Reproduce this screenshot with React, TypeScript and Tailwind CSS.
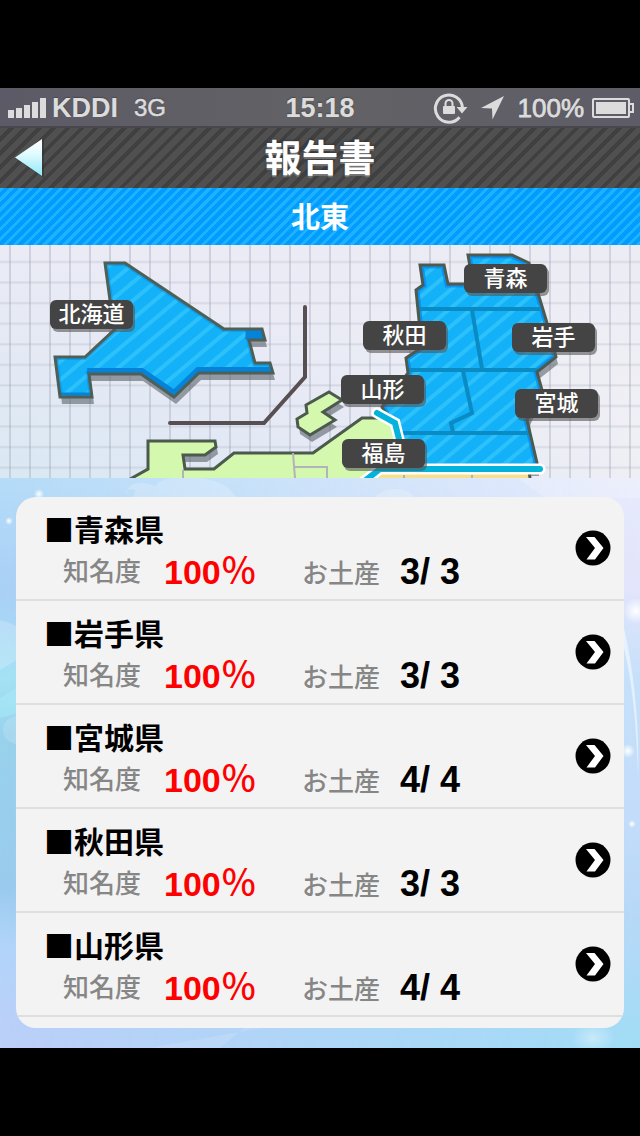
import { useId } from 'react';

interface Prefecture {
  name: string;
  fame: number;
  found: number;
  total: number;
}

const prefectures: Prefecture[] = [
  { name: '青森県', fame: 100, found: 3, total: 3 },
  { name: '岩手県', fame: 100, found: 3, total: 3 },
  { name: '宮城県', fame: 100, found: 4, total: 4 },
  { name: '秋田県', fame: 100, found: 3, total: 3 },
  { name: '山形県', fame: 100, found: 4, total: 4 },
];

const mapLabels = [
  { name: '北海道', position: 'left-[50px] top-[55px]' },
  { name: '青森', position: 'left-[464px] top-[19px]' },
  { name: '秋田', position: 'left-[363px] top-[76px]' },
  { name: '岩手', position: 'left-[512px] top-[78px]' },
  { name: '山形', position: 'left-[341px] top-[130px]' },
  { name: '宮城', position: 'left-[515px] top-[144px]' },
  { name: '福島', position: 'left-[342px] top-[194px]' },
];

function StatusBar() {
  return (
    <div className="grid h-10 grid-cols-3 items-center border-b-2 border-[#47474d] bg-linear-to-r from-[#5c5a66] via-[#636265] to-[#5e5c67] px-2 pt-0.5 text-[27px] leading-8 font-bold text-[#dcdcdc] [text-shadow:0_-1px_1px_#33333380]">
      <div className="flex items-center">
        <svg className="h-5 w-[38px]" viewBox="0 0 38 20" fill="currentColor" aria-hidden="true">
          <rect x="0" y="12" width="6" height="8" />
          <rect x="8" y="10" width="6" height="10" />
          <rect x="16" y="7" width="6" height="13" />
          <rect x="24" y="4" width="6" height="16" />
          <rect x="32" y="0" width="6" height="20" />
        </svg>
        <span className="ml-1.5">KDDI</span>
        <span className="ml-4 text-2xl leading-8 font-normal [-webkit-text-stroke:0.5px_currentColor]">3G</span>
      </div>
      <span className="text-center">15:18</span>
      <div className="-mr-2 flex items-center justify-end">
        <svg className="h-8 w-9 shrink-0" viewBox="0 0 36 32" fill="none" aria-hidden="true">
          <path d="M27.5 25.2A13.6 13.6 0 1 1 30.5 15" stroke="currentColor" strokeWidth="3" />
          <path d="M24.5 15h11L30 21.5z" fill="currentColor" />
          <rect x="11" y="14" width="12" height="8" rx="1" fill="currentColor" />
          <path d="M13.500 14v-2.500a3.500 3.500 0 0 1 7 0V14" stroke="currentColor" strokeWidth="2" />
        </svg>
        <svg className="ml-3 h-6 w-6 shrink-0" viewBox="0 0 24 24" fill="currentColor" aria-hidden="true">
          <path d="M24 0 12.500 23.500 12 12.500 1 12z" />
        </svg>
        <span className="ml-3.5 text-[26px] leading-8 font-normal [-webkit-text-stroke:0.8px_currentColor]">100%</span>
        <svg className="mr-1.5 ml-2 h-5 w-[42px] shrink-0" viewBox="0 0 42 20" aria-hidden="true">
          <rect x="1" y="1" width="36" height="18" rx="1" fill="none" stroke="currentColor" strokeWidth="2" />
          <rect x="4" y="4" width="30" height="12" fill="currentColor" />
          <path d="M38 6h3v8h-3" fill="none" stroke="currentColor" strokeWidth="2" />
        </svg>
      </div>
    </div>
  );
}

function Header() {
  return (
    <header>
      <div className="grid h-[60px] grid-cols-[64px_1fr_64px] items-center bg-[repeating-linear-gradient(135deg,#505050_0px,#505050_6px,#404040_6px,#404040_10px)]">
        <button type="button" aria-label="戻る" className="flex h-full items-center pl-3.5">
          <svg className="h-10 w-8" viewBox="0 0 32 40" aria-hidden="true">
            <defs>
              <linearGradient id="back" x1="0" y1="0" x2="0" y2="1">
                <stop offset="0" stopColor="#ffffff" />
                <stop offset="0.400" stopColor="#e2fbff" />
                <stop offset="1" stopColor="#8eeaf8" />
              </linearGradient>
            </defs>
            <path d="M30 1v39L1 20z" fill="#2b2b2b" opacity="0.500" />
            <path d="M28 1v37L1 19.500z" fill="url(#back)" />
          </svg>
        </button>
        <h1 className="pt-1 text-center text-[37px] leading-10 font-bold text-white [text-shadow:0_2px_1px_#777,0_0_3px_#222]">
          報告書
        </h1>
      </div>
      <h2 className="flex h-[57px] items-center justify-center bg-[repeating-linear-gradient(135deg,#1eb1ff_0px,#1eb1ff_3px,#009dff_3px,#009dff_7px)] pt-1 text-[29px] font-bold text-white">
        北東
      </h2>
    </header>
  );
}

function RegionMap() {
  const id = useId();
  const hokkaido =
    'M105 18H125L224 84H262L265 95H249L255 118H270L273 128H199L174 152 141 129H89L92 152H60L55 112H85L114 85z';
  const tohoku =
    'M420 20H444L448 39H473L468 10H512L529 18 538 48 547 78 556 112 537 127 542 145 527 175 537 218V224H400L400 195 382 162 408 128 406 113 421 103 419 75 416 45 423 40z';
  const west =
    'M120 240 132 233 148 224V196H215L216 202 205 210H183L185 224H214L234 208H313L362 173H390L402 200V224L372 240z';
  const island = 'M329 147 342 155 323 167 335 175 310 190 298 182 297 174 307 168 306 160z';

  return (
    <section aria-label="地図" className="relative overflow-hidden bg-[#e9ebf3]">
      <svg className="block h-[233px] w-[640px]" viewBox="0 0 640 233" aria-hidden="true">
        <defs>
          <linearGradient id={`${id}sky`} x1="0" y1="1" x2="1" y2="0.600">
            <stop offset="0" stopColor="#d9e8f3" />
            <stop offset="0.500" stopColor="#e4e9f5" />
            <stop offset="1" stopColor="#f2f1f5" />
          </linearGradient>
          <linearGradient id={`${id}haze`} x1="0" y1="0" x2="0" y2="1">
            <stop offset="0" stopColor="#ebebf5" stopOpacity="0.900" />
            <stop offset="1" stopColor="#ebebf5" stopOpacity="0" />
          </linearGradient>
          <pattern id={`${id}grid`} width="20" height="20.570" patternUnits="userSpaceOnUse">
            <path d="M10 0V20.570" stroke="#8e97a5" strokeOpacity="0.300" strokeWidth="2" />
            <path d="M0 17H20" stroke="#8e97a5" strokeOpacity="0.220" strokeWidth="2" />
          </pattern>
          <pattern id={`${id}stripe`} width="14" height="14" patternUnits="userSpaceOnUse" patternTransform="rotate(50)">
            <rect width="14" height="14" fill="#13b1f7" />
            <rect width="4" height="14" fill="#2cc1fb" />
          </pattern>
          <clipPath id={`${id}hokkaido`}>
            <path d={hokkaido} />
          </clipPath>
          <clipPath id={`${id}tohoku`}>
            <path d={tohoku} />
          </clipPath>
        </defs>

        <rect width="640" height="233" fill={`url(#${id}sky)`} />
        <rect width="640" height="233" fill={`url(#${id}haze)`} />
        <rect width="640" height="233" fill={`url(#${id}grid)`} />

        <g fill="#5d646c" opacity="0.600" transform="translate(2 7)">
          <path d={hokkaido} />
          <path d={tohoku} />
          <path d={west} />
          <path d={island} />
        </g>

        <g strokeWidth="3" stroke="#4b5a4c">
          <path d={west} fill="#d4f9ae" />
          <path d={island} fill="#d4f9ae" />
          <path d="M362 240 376 226H529L531 240z" fill="#f6e08e" />
        </g>
        <path d="M183 225V233M293 208 295 233M294 222H327V233M404 230V233M472 230V233" fill="none" stroke="#b1b3b8" strokeWidth="2" />

        <path d={hokkaido} fill={`url(#${id}stripe)`} />
        <g clipPath={`url(#${id}hokkaido)`}>
          <path d={hokkaido} fill="none" stroke="#0583d8" strokeWidth="6" opacity="0.400" />
          <path d="M87 126H142L174 148 198 125H273" fill="none" stroke="#0583d8" strokeWidth="6" />
          <path d="M247 86H265V93H247zM58 149H94" fill="#0583d8" stroke="#0583d8" strokeWidth="3" />
        </g>
        <path d={hokkaido} fill="none" stroke="#4d5f57" strokeWidth="3" />

        <path d={tohoku} fill={`url(#${id}stripe)`} />
        <g clipPath={`url(#${id}tohoku)`}>
          <path d={tohoku} fill="none" stroke="#0583e8" strokeWidth="7" opacity="0.700" />
        </g>
        <path
          d="M419 64H540M408 125H538M472 65 482 124M463 126 472 168 451 178 453 187M402 188H530"
          fill="none"
          stroke="#0a8bc3"
          strokeWidth="4"
        />
        <path d={tohoku} fill="none" stroke="#4d5a50" strokeWidth="3" />

        <g fill="none" strokeLinecap="round">
          <path d="M377 168 395 178 400 198 402 214M362 238 380 224H540" stroke="#ffffff" strokeWidth="11" />
          <path d="M377 168 395 178 400 198 402 214M362 238 380 224H540" stroke="#04b3dc" strokeWidth="6" />
        </g>
        <path d="M305 62V132L264 178H170" fill="none" stroke="#584f52" strokeWidth="4" strokeLinecap="round" />
      </svg>

      {mapLabels.map((label) => (
        <button
          key={label.name}
          type="button"
          className={`absolute flex h-[29px] w-[83px] items-center justify-center rounded-md bg-[#444444] text-[22px] font-medium text-white shadow-[2px_3px_0_#55555599] ${label.position}`}
        >
          {label.name}
        </button>
      ))}
    </section>
  );
}

function Backdrop() {
  return (
    <svg className="absolute inset-0 h-full w-full" viewBox="0 0 640 570" preserveAspectRatio="none" aria-hidden="true">
      <defs>
        <radialGradient id="glow">
          <stop offset="0" stopColor="#ffffff" />
          <stop offset="1" stopColor="#ffffff" stopOpacity="0" />
        </radialGradient>
      </defs>
      <g fill="#ffffff">
        <path d="M0 142Q14 146 20 150V180L0 192z" opacity="0.200" />
        <path d="M0 220 20 208V235L0 240z" fill="#a8ecfa" opacity="0.500" />
        <ellipse cx="18" cy="252" rx="15" ry="14" opacity="0.150" />
        <path d="M126 20Q126 -2 155 8Q165 -4 200 0Q230 3 240 26H126Q145 8 126 12z" opacity="0.200" />
        <ellipse cx="395" cy="22" rx="20" ry="11" opacity="0.200" />
        <path d="M518 0H640V20H545z" opacity="0.200" />
        <path d="M624 150Q640 220 638 300Q636 220 624 170z" opacity="0.500" />
        <path d="M150 570 290 545H250L220 570z" opacity="0.120" />
      </g>
      <g fill="url(#glow)">
        <circle cx="39" cy="16" r="5" />
        <circle cx="9" cy="43" r="4" />
        <circle cx="636" cy="133" r="13" />
        <circle cx="628" cy="273" r="7" />
        <circle cx="632" cy="346" r="4" />
        <ellipse cx="593" cy="560" rx="22" ry="16" opacity="0.400" />
      </g>
    </svg>
  );
}

function PrefectureRow({ prefecture }: { prefecture: Prefecture }) {
  return (
    <li className="border-b-2 border-[#dedede]">
      <button type="button" className="flex h-[102px] w-full items-center justify-between pr-[13px] pl-7 text-left">
        <span className="block">
          <span className="mt-2 block font-['Noto_Sans_CJK_JP',sans-serif] text-[30px] leading-10 font-bold text-black">
            ■{prefecture.name}
          </span>
          <span className="flex h-12 items-center pl-[19px] whitespace-pre">
            <span className="w-[101px] text-[26px] font-medium text-[#868686]">知名度</span>
            <span className="flex w-[138px] items-center text-[34px] font-bold text-[#ff0000]">
              {prefecture.fame}
              <span className="text-4xl font-medium">％</span>
            </span>
            <span className="w-[98px] pt-1 text-[26px] font-medium text-[#868686]">お土産</span>
            <span className="text-4xl font-bold text-black">
              {prefecture.found}/ {prefecture.total}
            </span>
          </span>
        </span>
        <svg className="h-9 w-9" viewBox="0 0 36 36" aria-hidden="true">
          <circle cx="18" cy="18" r="17.500" fill="#000000" />
          <path d="M11 7H19.500L28.500 18 20 29.500H11.500L20 18z" fill="#ffffff" />
        </svg>
      </button>
    </li>
  );
}

export default function App() {
  return (
    <div className="min-h-screen bg-black py-[88px] font-['Liberation_Sans','Noto_Sans_CJK_JP',sans-serif]">
      <StatusBar />
      <Header />
      <RegionMap />
      <main className="relative px-4 pt-[19px] pb-5">
        <div className="absolute inset-0 bg-[linear-gradient(to_bottom,#b5dcf8_0%,#a9d0f6_20%,#a4e2f5_35%,#98d2ec_45%,#9acbee_72%,#b2d4fa_82%,#bccff8_100%)]" />
        <div className="absolute inset-0 bg-[linear-gradient(to_bottom,#e8ebfc_0%,#e2e4fb_20%,#c6e0fa_35%,#c3dcfa_60%,#b9d8f8_75%,#a0dcf5_100%)] [mask-image:linear-gradient(to_right,transparent,black)]" />
        <Backdrop />
        <ul className="relative overflow-hidden rounded-[20px] bg-[#f3f3f3] pb-[11px]">
          {prefectures.map((prefecture) => (
            <PrefectureRow key={prefecture.name} prefecture={prefecture} />
          ))}
        </ul>
      </main>
    </div>
  );
}
